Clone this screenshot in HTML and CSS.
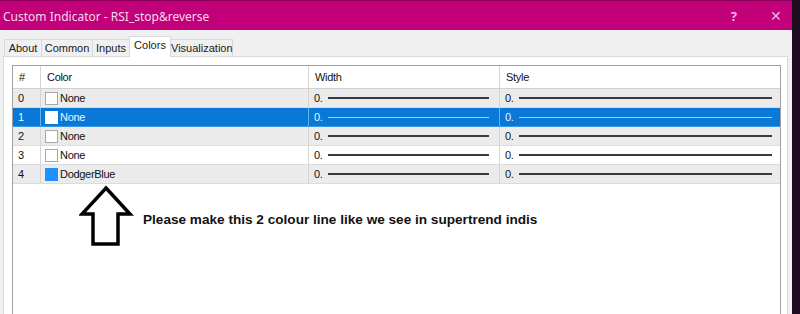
FILE: index.html
```html
<!DOCTYPE html>
<html>
<head>
<meta charset="utf-8">
<link rel="stylesheet" href="styles.css">
</head>
<body>
<div class="window">
  <div class="titlebar">
    <span class="title">Custom Indicator - RSI_stop&amp;reverse</span>
    <span class="tb-btns"><span class="help">?</span><span class="close">&#x2715;</span></span>
  </div>
  <div class="client">
    <div class="tabs">
      <div class="tab t-about">About</div>
      <div class="tab t-common">Common</div>
      <div class="tab t-inputs">Inputs</div>
      <div class="tab active t-colors">Colors</div>
      <div class="tab t-vis">Visualization</div>
    </div>
    <div class="tabpage">
      <div class="grid">
        <div class="row head">
          <div class="c c-num">#</div>
          <div class="c c-color">Color</div>
          <div class="c c-width">Width</div>
          <div class="c c-style">Style</div>
        </div>
        <div class="row alt">
          <div class="c c-num">0</div>
          <div class="c c-color"><span class="sw"></span>None</div>
          <div class="c c-width"><span>0.</span><span class="ln"></span></div>
          <div class="c c-style"><span>0.</span><span class="ln"></span></div>
        </div>
        <div class="row sel">
          <div class="c c-num">1</div>
          <div class="c c-color"><span class="sw"></span>None</div>
          <div class="c c-width"><span>0.</span><span class="ln"></span></div>
          <div class="c c-style"><span>0.</span><span class="ln"></span></div>
        </div>
        <div class="row alt">
          <div class="c c-num">2</div>
          <div class="c c-color"><span class="sw"></span>None</div>
          <div class="c c-width"><span>0.</span><span class="ln"></span></div>
          <div class="c c-style"><span>0.</span><span class="ln"></span></div>
        </div>
        <div class="row">
          <div class="c c-num">3</div>
          <div class="c c-color"><span class="sw"></span>None</div>
          <div class="c c-width"><span>0.</span><span class="ln"></span></div>
          <div class="c c-style"><span>0.</span><span class="ln"></span></div>
        </div>
        <div class="row alt last">
          <div class="c c-num">4</div>
          <div class="c c-color"><span class="sw blue"></span>DodgerBlue</div>
          <div class="c c-width"><span>0.</span><span class="ln"></span></div>
          <div class="c c-style"><span>0.</span><span class="ln"></span></div>
        </div>
        <div class="note">
          <svg class="arrow" width="56" height="64" viewBox="0 0 56 64">
            <polygon points="27,4 51,30 39,30 39,60 14,60 14,30 3,30" fill="none" stroke="#000" stroke-width="3.5" stroke-linejoin="miter"/>
          </svg>
          <span class="note-text">Please make this 2 colour line like we see in supertrend indis</span>
        </div>
      </div>
    </div>
  </div>
</div>
</body>
</html>
```
FILE: styles.css
```css
html, body {
  margin: 0;
  padding: 0;
}
body {
  background: #1d0b20;
  width: 800px;
  height: 314px;
  overflow: hidden;
}
.window {
  width: 792px;
  height: 314px;
  display: flex;
  flex-direction: column;
}
.titlebar {
  height: 29px;
  background: #c1007a;
  border-top: 1px solid #8a0057;
  display: flex;
  align-items: center;
  justify-content: space-between;
  font-family: "Noto Sans", "Liberation Sans", sans-serif;
  color: #f6d9ea;
}
.title {
  font-size: 12px;
  padding-left: 3px;
  padding-top: 1px;
}
.tb-btns {
  display: flex;
  align-items: center;
  padding-right: 10px;
}
.help {
  font-size: 13px;
  font-weight: bold;
  color: #f0b9da;
  margin-right: 33px;
}
.close {
  font-size: 14px;
  color: #f0b9da;
}
.client {
  flex: 1;
  background: #f0f0f0;
  padding: 6px 4px 0 3px;
  display: flex;
  flex-direction: column;
  min-height: 0;
}
.tabs {
  display: flex;
  align-items: flex-end;
  height: 20px;
  padding-left: 1px;
  font-family: "Liberation Sans", sans-serif;
  font-size: 11px;
  color: #1a1a1a;
  position: relative;
  z-index: 1;
}
.tab {
  height: 17px;
  line-height: 17px;
  border: 1px solid #d9d9d9;
  border-bottom: none;
  border-right: none;
  background: #f0f0f0;
  text-align: center;
  box-sizing: border-box;
}
.t-about { width: 37px; }
.t-common { width: 51px; }
.t-inputs { width: 37px; }
.t-colors { width: 42px; }
.t-vis { width: 62px; border-right: 1px solid #d9d9d9; }
.tab.active {
  height: 21px;
  line-height: 17px;
  background: #fff;
  margin-bottom: -1px;
  border-right: 1px solid #d9d9d9;
}
.tab.active + .tab { border-left: none; }
.tabpage {
  flex: 1;
  background: #fff;
  border: 1px solid #d9d9d9;
  border-bottom: none;
  padding: 8px 6px 0 8px;
  display: flex;
  flex-direction: column;
  min-height: 0;
}
.grid {
  flex: 1;
  border: 1px solid #a0a0a0;
  border-bottom: none;
  display: flex;
  flex-direction: column;
  font-family: "Liberation Sans", sans-serif;
  font-size: 11px;
  color: #111;
}
.row {
  display: grid;
  grid-template-columns: 27px 268px 191px 1fr;
  height: 19px;
  box-sizing: border-box;
  border-bottom: 1px solid #dcdcdc;
  background: #fff;
  letter-spacing: -0.3px;
}
.row.head {
  height: 23px;
  border-bottom: 1px solid #d0d0d0;
}
.row.alt { background: #ebebeb; }
.row.sel {
  background: #0a78d6;
  color: #e8f6ff;
  border-bottom-color: #3a98e6;
}
.c {
  display: flex;
  align-items: center;
  padding-left: 5px;
  border-left: 1px solid #d4d4d4;
  min-width: 0;
}
.c-num { border-left: none; padding-left: 5px; }
.c-color { padding-left: 4px; }
.row.sel .c { border-left-color: #5fb4f0; }
.row.sel .c-num { border-left: none; }
.head .c { padding-left: 6px; }
.sw {
  width: 13px;
  height: 13px;
  box-sizing: border-box;
  border: 1px solid #a8a8a8;
  background: #fff;
  margin-right: 2px;
}
.row.sel .sw { border-color: #fff; }
.sw.blue { background: #1e90ff; border-color: #1e90ff; }
.ln {
  flex: 1;
  height: 2px;
  background: #3a3a3a;
  margin-left: 5px;
}
.c-width .ln { margin-right: 10px; }
.c-style .ln { margin-right: 8px; }
.row.sel .ln { background: #8fdcff; height: 1px; }
.note {
  display: flex;
  align-items: flex-start;
  padding-left: 66px;
  padding-top: 0;
}
.arrow {
  display: block;
  flex: none;
}
.note-text {
  font-family: "Liberation Sans", sans-serif;
  font-weight: bold;
  font-size: 13.6px;
  letter-spacing: 0;
  color: #111;
  margin-left: 8px;
  margin-top: 28px;
}
```
